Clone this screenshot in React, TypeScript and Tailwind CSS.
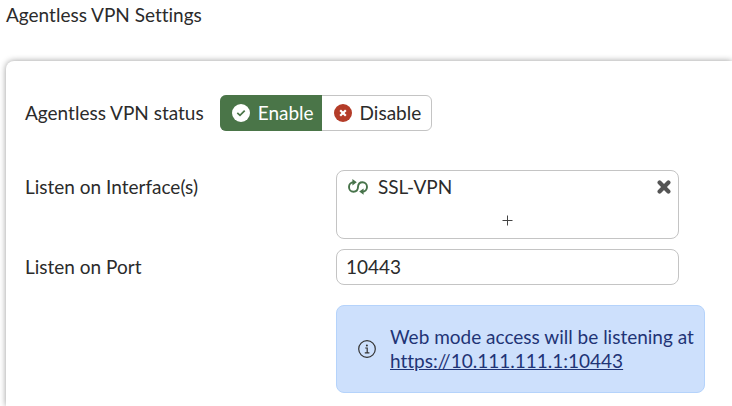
import { useState } from "react";
import type { ReactNode } from "react";

type Status = "enable" | "disable";

const CheckCircle = () => (
  <svg viewBox="0 0 18 18" className="size-[18px] shrink-0" aria-hidden="true">
    <circle cx="9" cy="9" r="9" fill="#ffffff" />
    <path d="m5.3 8.9 2.7 2.5 4.7-4.7" fill="none" stroke="#4a7548" strokeWidth="1.7" />
  </svg>
);

const CrossCircle = () => (
  <svg viewBox="0 0 18 18" className="size-[18px] shrink-0" aria-hidden="true">
    <circle cx="9" cy="9" r="9" fill="#b43c28" />
    <path d="m6.2 6.2 5.6 5.6m0-5.6-5.6 5.6" fill="none" stroke="#ffffff" strokeWidth="2.2" />
  </svg>
);

const TunnelIcon = () => (
  <svg viewBox="0 0 22 16" className="w-[22px] h-4 shrink-0" aria-hidden="true">
    <path
      d="M6.6 3.3C3.900 3.300 2 5.200 2 7.900s1.900 4.800 4.500 4.800c2.700 0 4.400-1.800 4.500-4.700.1-2.900 1.900-4.700 4.500-4.700s4.500 2 4.500 4.700-1.900 4.600-4.600 4.600"
      fill="none"
      stroke="#47734a"
      strokeWidth="1.9"
    />
    <path d="M5.400.1v6.400l4.400-3.200zM16.600 9.400v6.400l-4.400-3.200z" fill="#47734a" />
  </svg>
);

const RemoveIcon = () => (
  <svg viewBox="0 0 14 14" className="size-3.5" aria-hidden="true">
    <path
      d="m2.6 2.6 8.8 8.8m0-8.8-8.8 8.8"
      fill="none"
      stroke="#555555"
      strokeWidth="4.2"
      strokeLinecap="round"
    />
  </svg>
);

const PlusIcon = () => (
  <svg viewBox="0 0 11 11" className="size-[11px]" aria-hidden="true">
    <path d="M5.5.5v10M.5 5.5h10" fill="none" stroke="#444444" strokeWidth="1" />
  </svg>
);

const InfoIcon = () => (
  <svg viewBox="0 0 18 18" className="size-[18px] shrink-0" aria-hidden="true">
    <circle cx="9" cy="9" r="8.3" fill="none" stroke="#333333" strokeWidth="1.2" />
    <circle cx="8.9" cy="5.4" r="1" fill="#333333" />
    <path d="M7.2 8h2v4.8M6.8 12.8h4.6" fill="none" stroke="#333333" strokeWidth="1.2" />
  </svg>
);

const StatusOption = ({
  value,
  selected,
  onSelect,
  className,
  children,
}: {
  value: Status;
  selected: boolean;
  onSelect: (value: Status) => void;
  className: string;
  children: ReactNode;
}) => (
  <label className={`flex items-center gap-2 cursor-pointer ${className}`}>
    <input
      type="radio"
      name="vpn-status"
      value={value}
      checked={selected}
      onChange={() => onSelect(value)}
      className="sr-only"
    />
    {children}
  </label>
);

const App = () => {
  const [status, setStatus] = useState<Status>("enable");
  const [interfaces, setInterfaces] = useState(["SSL-VPN"]);
  const [port, setPort] = useState("10443");

  return (
    <div className="flex flex-col min-h-screen overflow-hidden bg-white font-['Lato',sans-serif] [font-variant-ligatures:none] text-[19px] leading-6 text-[#2b2b2b]">
      <h1 className="pt-[3px] pl-1.5">Agentless VPN Settings</h1>

      <main className="flex-1 mt-[34px] ml-1.5 pt-[34px] pl-[19px] pr-6 pb-3 bg-white rounded-tl-lg shadow-[0_0_6px_rgba(0,0,0,0.4)]">
        {/* Status toggle */}
        <div className="flex items-center gap-4">
          <span id="status-label">Agentless VPN status</span>
          <div
            role="radiogroup"
            aria-labelledby="status-label"
            className="flex h-9 rounded-md border border-[#c4c4c4]"
          >
            <StatusOption
              value="enable"
              selected={status === "enable"}
              onSelect={setStatus}
              className="-m-px pl-3 pr-2 rounded-l-md bg-[#4a7548] text-white"
            >
              <CheckCircle />
              Enable
            </StatusOption>
            <StatusOption
              value="disable"
              selected={status === "disable"}
              onSelect={setStatus}
              className="pl-[13px] pr-2.5"
            >
              <CrossCircle />
              Disable
            </StatusOption>
          </div>
        </div>

        <div className="grid grid-cols-[311px_minmax(0,1fr)] gap-y-2.5 mt-[39px]">
          {/* Interfaces */}
          <span id="interfaces-label" className="pt-[5px]">
            Listen on Interface(s)
          </span>
          <div
            role="group"
            aria-labelledby="interfaces-label"
            className="w-full max-w-[343px] rounded-lg border border-[#c4c4c4]"
          >
            {interfaces.map((name) => (
              <div key={name} className="flex items-center h-8 pl-2.5 pr-[7px]">
                <TunnelIcon />
                <span className="ml-[9px]">{name}</span>
                <button
                  type="button"
                  aria-label={`Remove ${name}`}
                  onClick={() => setInterfaces(interfaces.filter((item) => item !== name))}
                  className="ml-auto"
                >
                  <RemoveIcon />
                </button>
              </div>
            ))}
            <button
              type="button"
              aria-label="Add interface"
              className="flex items-center justify-center w-full h-[35px]"
            >
              <PlusIcon />
            </button>
          </div>

          {/* Port */}
          <label htmlFor="port" className="self-center">
            Listen on Port
          </label>
          <input
            id="port"
            type="text"
            value={port}
            onChange={(event) => setPort(event.target.value)}
            className="w-full max-w-[343px] h-9 px-[9px] pb-0.5 rounded-lg border border-[#c4c4c4]"
          />

          {/* Access notice */}
          <div className="col-start-2 flex items-center gap-3.5 w-full max-w-[369px] min-h-[88px] mt-2.5 pl-[21px] pr-2 rounded-lg border border-[#b5d3fb] bg-[#cde0fc] text-[#1f3476]">
            <InfoIcon />
            <p>
              Web mode access will be listening at{" "}
              <a href="https://10.111.111.1:10443" className="underline">
                https://10.111.111.1:10443
              </a>
            </p>
          </div>
        </div>
      </main>
    </div>
  );
};

export default App;
